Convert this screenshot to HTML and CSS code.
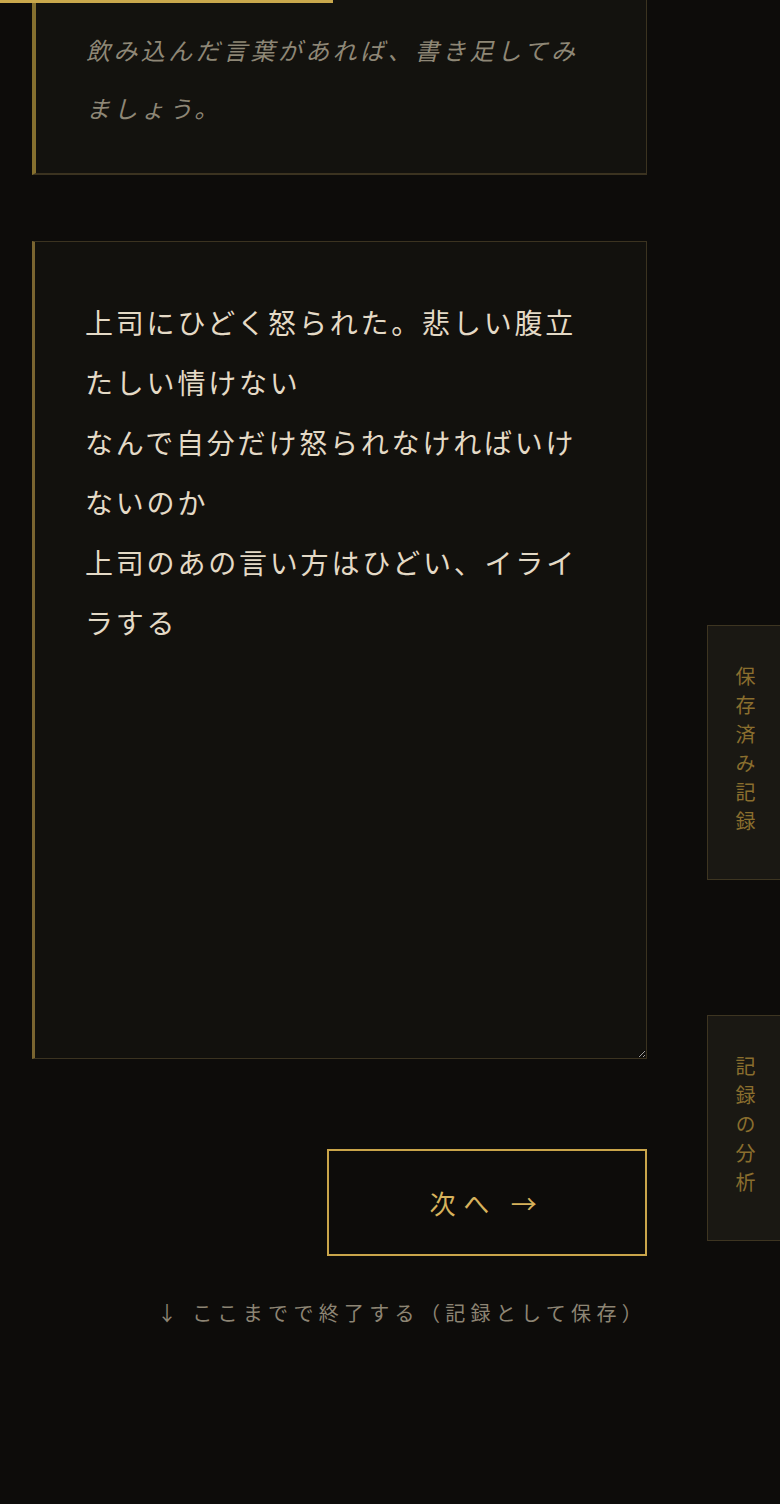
FILE: index.html
```html
<!DOCTYPE html>
<html lang="ja">
<head>
    <meta charset="UTF-8">
    <meta name="viewport" content="width=device-width, initial-scale=1.0">
    <title>記録</title>
    <link rel="stylesheet" href="styles.css">
</head>
<body>
    <div class="progress"><div class="progress-fill"></div></div>

    <div class="main">
        <div class="prev-box">
            <p class="hint">飲み込んだ言葉があれば、書き足してみましょう。</p>
        </div>

        <textarea class="entry">上司にひどく怒られた。悲しい腹立たしい情けない
なんで自分だけ怒られなければいけないのか
上司のあの言い方はひどい、イライラする</textarea>

        <div class="actions">
            <button class="next-btn">次へ →</button>
        </div>
        <div class="finish"><a href="#">↓ ここまでで終了する（記録として保存）</a></div>
    </div>

    <a href="#" class="side-tab tab-saved">保存済み記録</a>
    <a href="#" class="side-tab tab-analysis">記録の分析</a>
</body>
</html>
```

FILE: styles.css
```css
body{
    margin: 0;
    background-color: #0d0c0a;
    font-family: "Noto Sans CJK JP", "Noto Sans", sans-serif;
    color: #e4dac6;
    min-height: 1504px;
    overflow-x: hidden;
}
.progress{
    position: fixed;
    top: 0;
    left: 0;
    right: 0;
    height: 3px;
}
.progress-fill{
    width: 333px;
    height: 100%;
    background-color: #c9a84c;
}
.main{
    width: 615px;
    margin-left: 32px;
}
.prev-box{
    background-color: #13120e;
    border: 1px solid #3b3320;
    border-top: 0;
    border-bottom-width: 2px;
    border-left: 4px solid #85702f;
    padding: 21px 50px 36px 50px;
}
.hint{
    margin: 0;
    font-size: 24px;
    line-height: 58px;
    letter-spacing: 3.4px;
    font-style: italic;
    color: #8e8776;
}
.entry{
    display: block;
    box-sizing: border-box;
    width: 615px;
    height: 818px;
    margin-top: 66px;
    padding: 50px 50px;
    background-color: #12110d;
    border: 1px solid #3b3320;
    border-left: 3px solid #7a6530;
    color: #e4dac6;
    font-family: inherit;
    font-size: 28px;
    line-height: 60px;
    letter-spacing: 0.1em;
    outline: none;
}
.actions{
    display: flex;
    justify-content: flex-end;
    margin-top: 90px;
}
.next-btn{
    width: 320px;
    height: 107px;
    background: transparent;
    border: 2px solid #c9a54a;
    color: #d6b25c;
    font-family: inherit;
    font-size: 26px;
    letter-spacing: 0.3em;
    cursor: pointer;
}
.finish{
    margin-top: 42px;
    text-align: right;
}
.finish a{
    color: #8d8574;
    text-decoration: none;
    font-size: 20px;
    line-height: 30px;
    letter-spacing: 5.3px;
}
.side-tab{
    position: fixed;
    left: 707px;
    width: 20px;
    padding: 40px 36px 39px 27px;
    background-color: #1a1813;
    border: 1px solid #3d3521;
    writing-mode: vertical-rl;
    color: #8a6e2e;
    font-size: 20px;
    line-height: 20px;
    letter-spacing: 9px;
    text-decoration: none;
}
.tab-saved{
    top: 625px;
}
.tab-analysis{
    top: 1015px;
}
```
